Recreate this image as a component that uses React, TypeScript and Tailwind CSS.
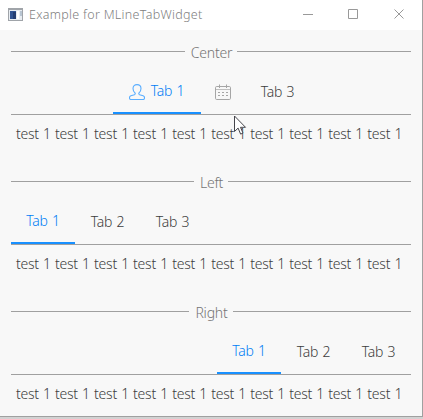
import React from "react";

type Align = "center" | "left" | "right";

const alignClass: Record<Align, string> = {
  center: "justify-center",
  left: "justify-start",
  right: "justify-end",
};

function UserIcon() {
  return (
    <svg width="16" height="16" viewBox="0 0 16 16" fill="none" stroke="#5aaeff" strokeWidth="1.1">
      <path d="M6.2 9.2C4.8 8.2 4 6.6 4 4.6C4 2.2 5.6 .6 8 .6s4 1.600 4 4c0 2-.8 3.600-2.200 4.600v.6c0 .5.3.7.8.9l3.500 1.100c.9.3 1.400.9 1.400 1.900c0 1.200-.5 1.800-1.300 1.800H1.800C1 15.500.5 14.900.5 13.700c0-1 .5-1.600 1.400-1.900l3.500-1.100c.5-.2.8-.4.8-.9z" />
    </svg>
  );
}

function CalendarIcon() {
  return (
    <svg width="16" height="16" viewBox="0 0 16 16" fill="none" stroke="#a6a6a6" strokeWidth="1">
      <rect x=".5" y="2.500" width="15" height="13" rx="1.200" />
      <path d="M.5 5.500h15" strokeOpacity=".7" />
      <path d="M4.500 .5v3.500M11.500 .5v3.500" />
      <path d="M3 8.500h2M7 8.500h2M11 8.500h2M3 11.500h2M7 11.500h2M11 11.500h2" />
    </svg>
  );
}

function Tab({ active = false, width, children }: { active?: boolean; width: string; children: React.ReactNode }) {
  return (
    <div
      className={`flex h-full items-center justify-center gap-1.5 border-b-2 ${width} ${
        active ? "border-[#1890ff] text-[#007df5]" : "border-transparent text-[#3c3c3c]"
      }`}
    >
      {children}
    </div>
  );
}

function Label({ lifted = false, children }: { lifted?: boolean; children: React.ReactNode }) {
  return <span className={lifted ? "pb-[3px] leading-5" : "pb-px leading-5"}>{children}</span>;
}

function Section({ title, align, children }: { title: string; align: Align; children: React.ReactNode }) {
  return (
    <section className="h-[130px] px-[11px]">
      <div className="flex h-[43px] items-center gap-[5px]">
        <div className="h-px flex-1 bg-[#a0a0a0]" />
        <span className="pt-[3px] pl-px text-sm leading-5 tracking-[-0.2px] text-[#757575]">{title}</span>
        <div className="h-px flex-1 bg-[#a0a0a0]" />
      </div>
      <div
        className={`flex h-[42px] border-b border-[#a0a0a0] text-sm tracking-[-0.25px] [word-spacing:0.900px] ${alignClass[align]}`}
      >
        {children}
      </div>
      <p className="pt-[9px] pl-[5px] text-sm leading-5 tracking-[-0.25px] [word-spacing:0.850px] whitespace-nowrap text-[#3c3c3c]">
        {Array(10).fill("test 1").join(" ")}
      </p>
    </section>
  );
}

function TitleBar() {
  return (
    <header className="flex h-[30px] items-center pl-2">
      <svg width="15" height="13" viewBox="0 0 15 13" className="mb-0.5" shapeRendering="crispEdges">
        <rect width="15" height="13" fill="#a0a4a9" />
        <rect x="1" y="2" width="13" height="10" fill="#e8edf2" />
        <rect x="2" y="3" width="6" height="8" fill="#315493" />
        <rect x="5" y="4" width="3" height="7" fill="#243e72" />
        <rect x="9" y="3" width="2" height="8" fill="#fff" />
        <rect x="12" y="3" width="2" height="5" fill="#b8c5d2" />
      </svg>
      <h1 className="ml-1.5 flex-1 text-[12.5px] leading-5 tracking-[0.3px] whitespace-nowrap text-[#808080]">
        Example for MLineTabWidget
      </h1>
      <svg width="102" height="10" viewBox="0 0 102 10" className="mr-[17px] mb-0.5" fill="none" stroke="#999">
        <path d="M0 5.500h10M45.500 .5h9v9h-9zM91.500 .5l9 9M100.500 .5l-9 9" />
      </svg>
    </header>
  );
}

export default function App() {
  return (
    <div className="h-[419px] w-[423px] overflow-hidden bg-[#d2d2d2] font-['Noto_Sans',sans-serif] font-light">
      <main className="relative h-[417px] border-r border-b border-[#a0a0a0] bg-white">
        <TitleBar />
        <div className="h-[386px] overflow-hidden bg-[#f8f8f8]">
          <Section title="Center" align="center">
            <Tab active width="w-[88px]">
              <div className="pb-0.5"><UserIcon /></div>
              <Label lifted>Tab 1</Label>
            </Tab>
            <Tab width="w-[45px]">
              <div className="pb-0.5"><CalendarIcon /></div>
            </Tab>
            <Tab width="w-[64px]"><Label>Tab 3</Label></Tab>
          </Section>
          <Section title="Left" align="left">
            <Tab active width="w-[64px]"><Label lifted>Tab 1</Label></Tab>
            <Tab width="w-[65px]"><Label>Tab 2</Label></Tab>
            <Tab width="w-[65px]"><Label>Tab 3</Label></Tab>
          </Section>
          <Section title="Right" align="right">
            <Tab active width="w-[64px]"><Label lifted>Tab 1</Label></Tab>
            <Tab width="w-[65px]"><Label>Tab 2</Label></Tab>
            <Tab width="w-[65px]"><Label>Tab 3</Label></Tab>
          </Section>
        </div>
        <svg className="absolute top-[115px] left-[234px]" width="13" height="21" viewBox="0 0 13 21">
          <path d="M.5 1v15.500l3.600-3.400 2.500 6 2.400-1-2.500-5.800h5z" fill="#fff" stroke="#45454b" />
        </svg>
      </main>
    </div>
  );
}
